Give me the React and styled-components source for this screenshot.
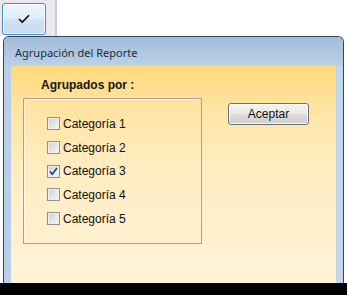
import React from "react";
import styled, { createGlobalStyle } from "styled-components";

const Global = createGlobalStyle`
  html, body { margin: 0; padding: 0; background: #ffffff; }
  body { width: 347px; height: 295px; overflow: hidden; }
  #root { width: 347px; height: 295px; }
`;

const Page = styled.div`
  width: 347px;
  height: 295px;
  display: flex;
  flex-direction: column;
  background: #ffffff;
`;

const TopStrip = styled.div`
  height: 36px;
  display: flex;
  flex-shrink: 0;
`;

const ToolPanel = styled.div`
  width: 57px;
  border-right: 2px solid #c9c8dc;
  background: #e9e8f1;
  display: flex;
  align-items: flex-start;
  padding: 3px 0 0 2px;
  box-sizing: border-box;
`;

const ToolButton = styled.div`
  width: 44px;
  height: 32px;
  box-sizing: border-box;
  border: 1px solid #4b8dc4;
  border-radius: 3px;
  background: linear-gradient(#eef6fc 0%, #dfedf8 50%, #cfe3f3 51%, #c6ddf0 100%);
  box-shadow: inset 0 0 0 1px rgba(255, 255, 255, 0.7);
  display: flex;
  align-items: center;
  justify-content: center;
`;

const DialogRow = styled.div`
  flex: 1;
  display: flex;
  padding: 0 3px;
  min-height: 0;
`;

const Dialog = styled.div`
  flex: 1;
  display: flex;
  flex-direction: column;
  border: 1px solid #33455a;
  border-bottom: none;
  border-radius: 6px 6px 0 0;
  background: linear-gradient(90deg, #b9cfe8 0%, #c3d6ec 100%);
  overflow: hidden;
`;

const TitleBar = styled.div`
  height: 29px;
  flex-shrink: 0;
  display: flex;
  align-items: center;
  padding: 2px 0 0 11px;
  box-sizing: border-box;
  background: linear-gradient(#a3bcd8 0%, #adc6e1 50%, #bcd1e9 100%);
  font-family: "Noto Sans", "Open Sans", sans-serif;
  font-size: 11px;
  color: #1e2a38;
`;

const Frame = styled.div`
  flex: 1;
  display: flex;
  padding: 0 7px;
  min-height: 0;
`;

const Client = styled.div`
  flex: 1;
  display: flex;
  align-items: flex-start;
  padding: 12px 0 0 12px;
  box-sizing: border-box;
  background: linear-gradient(#ffd879 0%, #ffe3a0 18%, #ffecc0 45%, #fff3d9 100%);
`;

const LeftCol = styled.div`
  display: flex;
  flex-direction: column;
`;

const GroupLabel = styled.div`
  padding-left: 18px;
  font-family: "Liberation Sans", Arial, sans-serif;
  font-weight: bold;
  font-size: 12px;
  line-height: 14px;
  color: #151515;
`;

const GroupBox = styled.div`
  margin-top: 6px;
  width: 179px;
  height: 146px;
  box-sizing: border-box;
  border: 1px solid #a7a296;
  box-shadow: inset 1px 1px 0 rgba(255, 255, 255, 0.6);
  padding: 13px 0 0 23px;
  display: flex;
  flex-direction: column;
`;

const Row = styled.label`
  height: 23.7px;
  display: flex;
  align-items: center;
  gap: 3px;
  font-family: "Liberation Sans", Arial, sans-serif;
  font-size: 12px;
  color: #111111;
`;

const Box = styled.span`
  width: 13px;
  height: 13px;
  box-sizing: border-box;
  border: 1px solid #8e8f8f;
  background: linear-gradient(135deg, #c9cbce 0%, #e6e7e8 55%, #f7f7f7 100%);
  box-shadow: inset 0 0 0 1px #f1f1f1;
  display: flex;
  align-items: center;
  justify-content: center;
  flex-shrink: 0;
`;

const PushButton = styled.div`
  margin: 25px 0 0 26px;
  width: 81px;
  height: 22px;
  box-sizing: border-box;
  border: 1px solid #707070;
  border-radius: 3px;
  background: linear-gradient(#f2f2f2 0%, #ebebeb 48%, #dddddd 52%, #cfcfcf 100%);
  box-shadow: inset 0 0 0 1px rgba(255, 255, 255, 0.75);
  display: flex;
  align-items: center;
  justify-content: center;
  font-family: "Liberation Sans", Arial, sans-serif;
  font-size: 12px;
  color: #111111;
`;

const Taskbar = styled.div`
  height: 12px;
  flex-shrink: 0;
  background: #000000;
`;

const CheckMark = () => (
  <svg width="11" height="11" viewBox="0 0 11 11">
    <path d="M2 5.5 L4.3 8.3 L9 2" fill="none" stroke="#1d3c86" strokeWidth="1.6" />
  </svg>
);

const Checkbox = ({ checked, label }) => (
  <Row>
    <Box>{checked && <CheckMark />}</Box>
    {label}
  </Row>
);

const items = [
  { label: "Categoría 1", checked: false },
  { label: "Categoría 2", checked: false },
  { label: "Categoría 3", checked: true },
  { label: "Categoría 4", checked: false },
  { label: "Categoría 5", checked: false },
];

export default function App() {
  return (
    <>
      <Global />
      <Page>
        <TopStrip>
          <ToolPanel>
            <ToolButton>
              <svg width="12" height="10" viewBox="0 0 12 10">
                <path d="M1 5 L4.2 8.2 L11 1.2" fill="none" stroke="#000" strokeWidth="1.5" />
              </svg>
            </ToolButton>
          </ToolPanel>
        </TopStrip>
        <DialogRow>
          <Dialog>
            <TitleBar>Agrupación del Reporte</TitleBar>
            <Frame>
              <Client>
                <LeftCol>
                  <GroupLabel>Agrupados por :</GroupLabel>
                  <GroupBox>
                    {items.map((it) => (
                      <Checkbox key={it.label} label={it.label} checked={it.checked} />
                    ))}
                  </GroupBox>
                </LeftCol>
                <PushButton>Aceptar</PushButton>
              </Client>
            </Frame>
          </Dialog>
        </DialogRow>
        <Taskbar />
      </Page>
    </>
  );
}
